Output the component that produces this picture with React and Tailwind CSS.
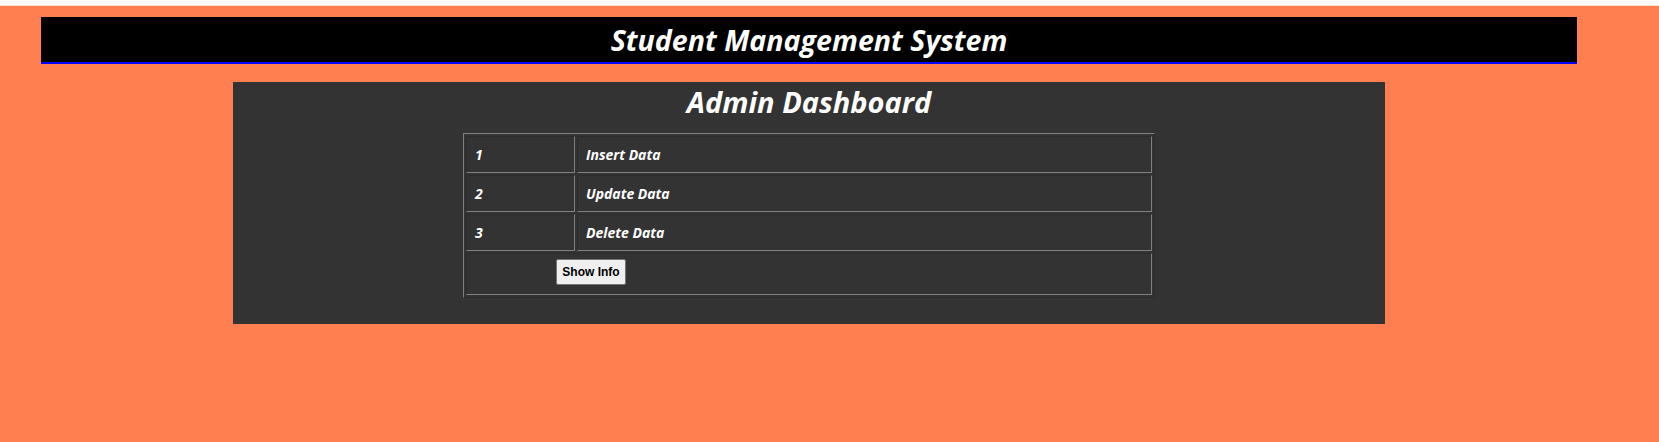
import React from "react";

const MenuLists = [
  { no: "1", name: "Insert Data" },
  { no: "2", name: "Update Data" },
  { no: "3", name: "Delete Data" },
];

const cellClass =
  "[border-width:1px] [border-style:inset] [border-color:#808080] px-2 py-0 h-[37px] text-left";

const AdminTable = () => {
  return (
    <table className="mx-auto w-[692px] border-separate border-spacing-[2px] [border-width:1px] [border-style:outset] [border-color:#808080]">
      <tbody>
        {MenuLists.map((item, k) => (
          <tr key={k}>
            <td className={`${cellClass} w-[109px]`}>{item.no}</td>
            <td className={cellClass}>{item.name}</td>
          </tr>
        ))}
        <tr>
          <td
            colSpan={2}
            className="[border-width:1px] [border-style:inset] [border-color:#808080] h-[42px] pl-[89px] pt-[5px] pb-0 align-top"
          >
            <button
              type="button"
              className="w-[70px] h-[26px] bg-[#efefef] border border-[#767676] rounded-[2px] text-black text-[12px] not-italic font-bold font-['Liberation_Sans',Arial,sans-serif]"
            >
              Show Info
            </button>
          </td>
        </tr>
      </tbody>
    </table>
  );
};

const App = () => {
  return (
    <div className="min-h-screen bg-[#ff7f50] font-['Open_Sans',sans-serif]">
      <div className="h-[5px] bg-white" />
      <div className="h-px bg-[#f9dcd1]" />

      <div className="w-[1618px] pt-[11px]">
        <header className="mx-[41px] h-[47px] bg-black border-b-2 border-[#0000ff] flex items-center justify-center pt-[1px]">
          <h1 className="text-white italic font-bold text-[28.6px]">
            Student Management System
          </h1>
        </header>

        <div className="mx-auto mt-[18px] w-[1152px] h-[242px] bg-[#333333] pt-[2px]">
          <h2 className="text-center text-white italic font-bold text-[29px] leading-[36px]">
            Admin Dashboard
          </h2>
          <div className="mt-[13px] text-white italic font-bold text-[14px]">
            <AdminTable />
          </div>
        </div>
      </div>
    </div>
  );
};

export default App;
